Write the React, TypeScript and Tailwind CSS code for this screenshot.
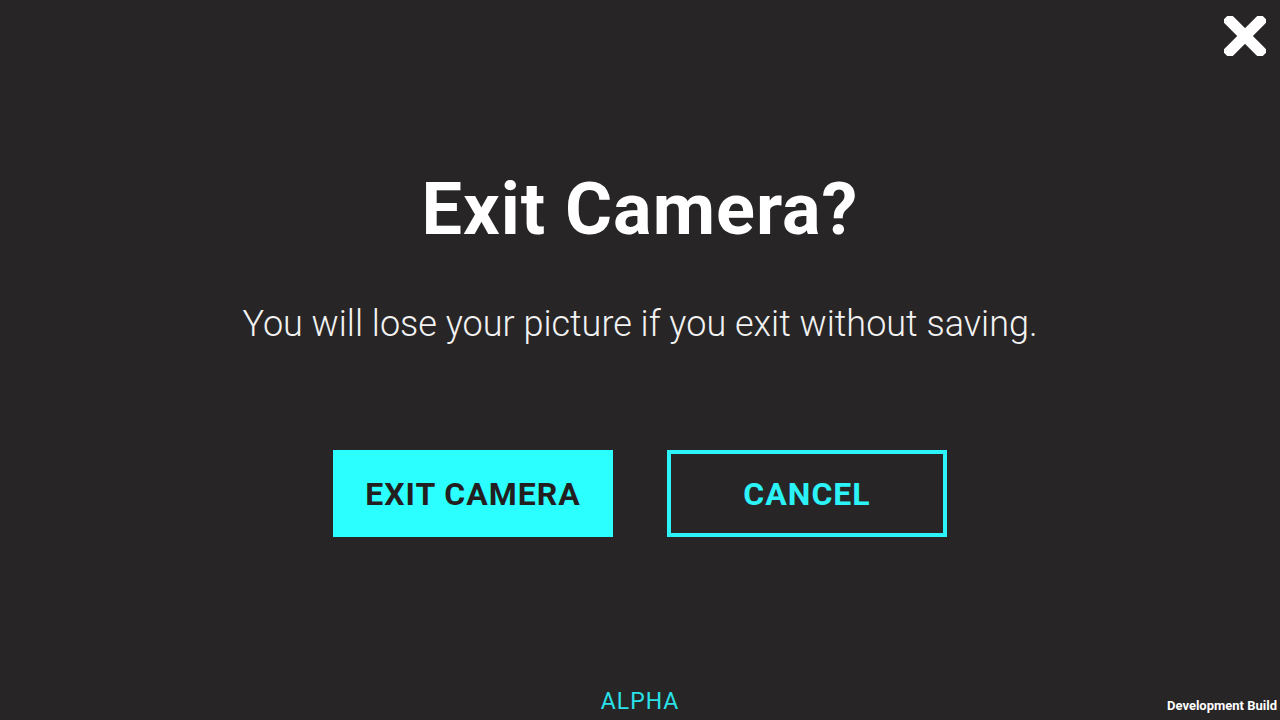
import React from 'react';

function CloseIcon() {
  return (
    <svg width="42" height="40" viewBox="0 0 42 40" aria-hidden="true">
      <path d="M6 5 L36 35 M36 5 L6 35" stroke="#ffffff" strokeWidth="11" strokeLinecap="square" />
    </svg>
  );
}

export default function App() {
  return (
    <div className="relative w-[1280px] h-[720px] overflow-hidden bg-[#282526] text-white font-['Roboto',sans-serif]">
      <button className="absolute right-[14px] top-[16px]" aria-label="Close">
        <CloseIcon />
      </button>

      <div className="flex flex-col items-center pt-[170px]">
        <h1 className="text-[72px] leading-[80px] font-bold tracking-[1px]">Exit Camera?</h1>
        <p className="mt-[52px] text-[36px] leading-[44px] font-light text-[#f2f2f2]">
          You will lose your picture if you exit without saving.
        </p>
        <div className="mt-[104px] flex gap-[54px]">
          <button className="w-[280px] h-[87px] bg-[#2bffff] text-[#231f20] text-[32px] font-bold tracking-[1px]">
            EXIT CAMERA
          </button>
          <button className="w-[280px] h-[87px] border-[4px] border-[#2bf3f7] text-[#2bf3f7] text-[32px] font-bold tracking-[1px]">
            CANCEL
          </button>
        </div>
      </div>

      <div className="absolute bottom-[4px] left-0 right-0 text-center text-[23px] leading-[28px] text-[#2ae2ea] tracking-[1px]">
        ALPHA
      </div>
      <div className="absolute bottom-[6px] right-[3px] text-[13px] leading-[16px] font-bold text-white">
        Development Build
      </div>
    </div>
  );
}
